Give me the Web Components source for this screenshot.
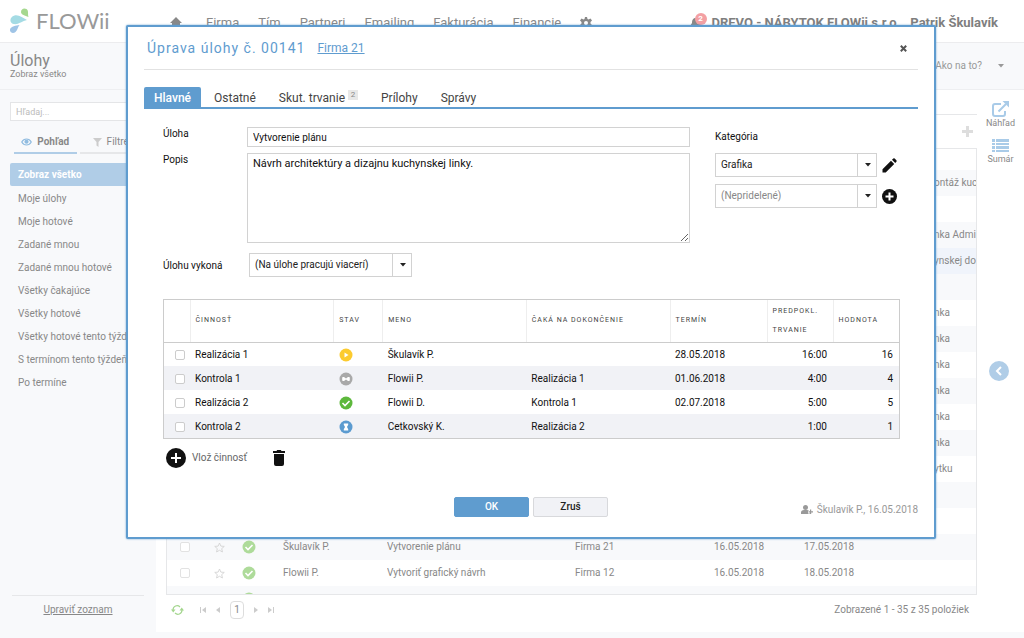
<!DOCTYPE html>
<html lang="sk">
<head>
<meta charset="utf-8">
<meta name="viewport" content="width=device-width, initial-scale=1">
<title>FLOWii - Úlohy</title>
<style>
    body {
        margin: 0;
        font-family: Roboto, "Liberation Sans", sans-serif;
        font-size: 10px;
        line-height: 12px;
        color: #888;
        background: #f8f9fb;
    }
</style>
</head>
<body>
<flowii-app></flowii-app>

<script>
const icons = {
    home: '<svg width="12" height="12" viewBox="0 0 12 12"><path fill="#888" d="M6 0 12 6H10V11H7V8H5V11H2V6H0Z"/></svg>',
    gear: '<svg width="12" height="12" viewBox="0 0 24 24"><path fill="#888" d="M10 0h4l1 4 2 1 4-2 3 4-3 3v3l3 3-2 4-4-1-3 2-1 3h-4l-1-3-3-2-4 1-2-4 3-3v-3L0 7l3-4 4 2 2-1Zm2 8a4 4 0 1 0 0 8 4 4 0 0 0 0-8Z"/></svg>',
    bell: '<svg width="12" height="12" viewBox="0 0 12 12"><path fill="#888" d="M6 1c3 0 4 2 4 5l2 3H0l2-3c0-3 1-5 4-5ZM4 10h4l-2 2Z"/></svg>',
    caret: '<svg width="6" height="4" viewBox="0 0 6 4"><path fill="currentColor" d="M0 0h6L3 3.5Z"/></svg>',
    eye: '<svg width="11" height="8" viewBox="0 0 22 16"><path fill="none" stroke="#90bce0" stroke-width="2.4" d="M1.500 8C6 0 16 0 20.500 8 16 16 6 16 1.500 8Z"/><circle cx="11" cy="7.500" r="4.200" fill="#90bce0"/></svg>',
    filter: '<svg width="9" height="9" viewBox="0 0 9 9"><path fill="#ccc" d="M0 0h9L5.500 4v5L3.500 7.500V4Z"/></svg>',
    open: '<svg width="18" height="16" viewBox="0 0 18 16"><path fill="none" stroke="#a9cbe8" stroke-width="2" d="M9 3H3Q1 3 1 5v8q0 2 2 2h8q2 0 2-2v-3M6.500 10.500 14 3"/><path fill="#a9cbe8" d="M10.500 0H17v6.500Z"/></svg>',
    list: '<svg width="17" height="14" viewBox="0 0 17 14"><path fill="#a9cbe8" d="M0 0h3v3H0zM4 0h13v3H4zM0 4h3v2H0zM4 4h13v2H4zM0 7h3v3H0zM4 7h13v3H4zM0 11h3v2H0zM4 11h13v2H4z"/></svg>',
    left: '<svg width="20" height="20" viewBox="0 0 20 20"><circle cx="10" cy="10" r="10" fill="#b0cde7"/><path fill="none" stroke="#fff" stroke-width="2" d="m12 6-4 4 4 4"/></svg>',
    plus: '<svg width="11" height="11" viewBox="0 0 11 11"><path fill="#ddd" d="M4 0h3v4h4v3H7v4H4V7H0V4h4Z"/></svg>',
    star: '<svg width="11" height="11" viewBox="0 0 22 22"><path fill="none" stroke="#d4d4d4" stroke-width="1.800" d="m11 2 2.700 6.200 6.800.6-5.100 4.500 1.500 6.700-5.900-3.500L5.100 20l1.500-6.700L1.500 8.800l6.800-.6Z"/></svg>',
    donePale: '<svg width="14" height="14" viewBox="0 0 14 14"><circle cx="7" cy="7" r="6.500" fill="#aedb9a"/><path fill="none" stroke="#fff" stroke-width="1.600" d="m3.500 7 2.500 2.500L10.500 5"/></svg>',
    done: '<svg width="14" height="14" viewBox="0 0 14 14"><circle cx="7" cy="7" r="6.500" fill="#5db83c"/><path fill="none" stroke="#fff" stroke-width="1.600" d="m3.500 7 2.500 2.500L10.500 5"/></svg>',
    play: '<svg width="14" height="14" viewBox="0 0 14 14"><circle cx="7" cy="7" r="6.500" fill="#fccb2f"/><path fill="#fff" d="m5.500 4.500 4 2.500-4 2.500Z"/></svg>',
    pause: '<svg width="14" height="14" viewBox="0 0 14 14"><circle cx="7" cy="7" r="6.500" fill="#a9a9a9"/><path fill="#fff" d="M4 5h1l2 1.500L9 5h1q.8 0 .8.800v2.400q0 .8-.8.800H9L7 7.500 5 9H4q-.8 0-.8-.8V5.800Q3.200 5 4 5Z"/></svg>',
    wait: '<svg width="14" height="14" viewBox="0 0 14 14"><circle cx="7" cy="7" r="6.500" fill="#5b9bd0"/><path fill="#fff" d="M4.800 3.500h4.400v1.300L8 7l1.200 2.200v1.300H4.800V9.200L6 7 4.800 4.800Z"/></svg>',
    refresh: '<svg width="13" height="12" viewBox="0 0 26 24"><path fill="none" stroke="#a4d68e" stroke-width="2.400" d="M4 12C4 4 13 1 18 6M22 12c0 8-9 11-14 6"/><path fill="#a4d68e" d="M0 11h9l-4.500 6ZM17 13h9l-4.500-6Z"/></svg>',
    first: '<svg width="6" height="6" viewBox="0 0 6 6"><path fill="#ccc" d="M0 0h1v6H0zM6 0v6L2 3Z"/></svg>',
    prev: '<svg width="6" height="6" viewBox="0 0 6 6"><path fill="#ccc" d="M5 0v6L1 3Z"/></svg>',
    next: '<svg width="6" height="6" viewBox="0 0 6 6"><path fill="#ccc" d="M1 0v6l4-3Z"/></svg>',
    last: '<svg width="6" height="6" viewBox="0 0 6 6"><path fill="#ccc" d="M5 0h1v6H5zM0 0v6l4-3Z"/></svg>',
    close: '<svg width="7" height="7" viewBox="0 0 7 7"><path stroke="#555" stroke-width="2" d="m.8.8 5.400 5.400M6.200.8.8 6.200"/></svg>',
    pencil: '<svg width="15" height="15" viewBox="0 0 15 15"><path fill="#111" d="M.5 14.500V11.300L9 2.800 12.200 6l-8.500 8.500ZM10 1.800 11.300.6q.7-.6 1.400 0l1.700 1.700q.6.700 0 1.400L13.200 5Z"/></svg>',
    add: '<svg width="20" height="20" viewBox="0 0 20 20"><circle cx="10" cy="10" r="10" fill="#111"/><path fill="#fff" d="M9 5h2v4h4v2h-4v4H9v-4H5V9h4Z"/></svg>',
    addSmall: '<svg width="15" height="15" viewBox="0 0 15 15"><circle cx="7.500" cy="7.500" r="7.500" fill="#111"/><path fill="#fff" d="M6.500 3.500h2v3h3v2h-3v3h-2v-3h-3v-2h3Z"/></svg>',
    trash: '<svg width="12" height="16" viewBox="0 0 12 16"><path fill="#111" d="M0 1h3.500l.7-1h3.600l.7 1H12v2H0ZM1 4h10v10q0 2-2 2H3q-2 0-2-2Z"/></svg>',
    userAdd: '<svg width="12" height="10" viewBox="0 0 12 10"><circle cx="4.500" cy="2.600" r="2.500" fill="#999"/><path fill="#999" d="M0 9V7.500Q0 5 3 5h3q1.500 0 2 1H7v2.500h2V9ZM9 4.500h1.200v1.700H12v1.200h-1.800V9H9V7.400H7.500V6.200H9Z"/></svg>',
    drops: '<svg width="20" height="26" viewBox="0 0 20 26"><path fill="#a5d88f" d="M18.500 9C15 7.500 11 7 11 4c0-3 3-4.500 5.500-3C19 2.500 17.500 6 18.500 9Z"/><path fill="#a4dbe4" d="M17 12C13 10 9 6.500 4.500 7.500c-5 1.500-5.500 7-1 8.500 4.500 1 8.500-3 13.500-4Z"/><path fill="#9fc4e6" d="M9.500 17C6 17.500 1 18 0 21.500c-.5 3 3 4.500 5.500 2.500 2.500-2 2-5 4-7Z"/></svg>'
};

// rules every shadow root needs
const base = `
    * { box-sizing: border-box; }
    svg { display: block; flex: none; }
    a { color: inherit; }
    button, input, select, textarea { font: inherit; color: inherit; margin: 0; }
    button { display: flex; align-items: center; justify-content: center; padding: 0; border: 0; background: none; }
    input[type=checkbox] { appearance: none; display: block; width: 10px; height: 10px; border: 1px solid #ccc; border-radius: 2px; background: #fff; }
`;

class FlowiiElement extends HTMLElement {
    constructor() {
        super();
        this.attachShadow({ mode: 'open' });
    }

    connectedCallback() {
        this.shadowRoot.innerHTML = `<style>${base}${this.styles()}</style>${this.render()}`;
    }
}

class FlowiiHeader extends FlowiiElement {
    styles() {
        return `
            :host { display: flex; align-items: center; height: 43px; padding: 0 26px 0 10px; background: #fff; border-bottom: 1px solid #ececee; font-size: 13px; line-height: 16px; white-space: nowrap; }
            .logo { display: flex; align-items: center; gap: 6px; width: 160px; font-family: Lato, sans-serif; font-size: 22px; line-height: 26px; color: #999; }
            nav { display: flex; align-items: center; gap: 19px; flex: 1; padding-top: 4px; }
            nav a { text-decoration: none; }
            nav a:first-child { margin-right: 5px; }
            .user { display: flex; align-items: center; gap: 10px; padding-top: 4px; font-weight: 700; color: #7f7f7f; }
            .bell { position: relative; }
            .badge { position: absolute; left: 5px; top: -4px; width: 12px; height: 12px; border-radius: 6px; background: #f3a0a3; color: #fff; font-size: 8px; line-height: 12px; text-align: center; }
        `;
    }

    render() {
        const links = ['Firma', 'Tím', 'Partneri', 'Emailing', 'Fakturácia', 'Financie'];
        return `
            <div class="logo">${icons.drops}<span>FLOWii</span></div>
            <nav>
                <a href="#" aria-label="Domov">${icons.home}</a>
                ${links.map(l => `<a href="#">${l}</a>`).join('')}
                <a href="#" aria-label="Nastavenia">${icons.gear}</a>
            </nav>
            <div class="user">
                <span class="bell">${icons.bell}<span class="badge">2</span></span>
                <span>DREVO - NÁBYTOK FLOWii s.r.o.</span>
                <span>Patrik Škulavík</span>
            </div>
        `;
    }
}

class PageTitle extends FlowiiElement {
    styles() {
        return `
            :host { display: flex; align-items: center; justify-content: space-between; height: 47px; padding: 0 20px 0 10px; border-bottom: 1px solid #eeeff1; }
            h1 { margin: 0; font-size: 16px; line-height: 16px; font-weight: 400; }
            p { margin: 0; font-size: 9px; line-height: 11px; }
            button { gap: 16px; color: #999; }
        `;
    }

    render() {
        return `
            <div><h1>Úlohy</h1><p>Zobraz všetko</p></div>
            <button>Ako na to? ${icons.caret}</button>
        `;
    }
}

class TaskSidebar extends FlowiiElement {
    styles() {
        return `
            :host { display: flex; flex-direction: column; padding: 12px 10px 22px; white-space: nowrap; }
            input { width: 100%; height: 19px; padding: 0 5px; border: 1px solid #e4e5e7; background: #fff; font-size: 9px; }
            input::placeholder { color: #bbb; }
            .tabs { display: flex; gap: 3px; margin: 11px 4px 9px; }
            .tabs button { flex: 1; height: 22px; gap: 5px; border-bottom: 2px solid #e6e7e9; }
            .tabs button.active { border-color: #b0cde7; font-weight: 700; }
            ul { flex: 1; margin: 0; padding: 0; list-style: none; }
            li a { display: block; padding: 0 8px; line-height: 23px; text-decoration: none; }
            li.active { margin-bottom: 1px; background: #b0cde7; border-radius: 2px; font-weight: 700; color: #fff; }
            .edit { margin: 0 2px; padding-top: 8px; border-top: 1px solid #e6e7e9; text-align: center; }
        `;
    }

    render() {
        const views = ['Zobraz všetko', 'Moje úlohy', 'Moje hotové', 'Zadané mnou', 'Zadané mnou hotové', 'Všetky čakajúce',
            'Všetky hotové', 'Všetky hotové tento týždeň', 'S termínom tento týždeň', 'Po termíne'];
        return `
            <input type="text" placeholder="Hľadaj..." aria-label="Hľadaj">
            <div class="tabs">
                <button class="active">${icons.eye}Pohľad</button>
                <button>${icons.filter}Filtre</button>
            </div>
            <ul>${views.map((v, i) => `<li class="${i ? '' : 'active'}"><a href="#">${v}</a></li>`).join('')}</ul>
            <div class="edit"><a href="#">Upraviť zoznam</a></div>
        `;
    }
}

class TaskList extends FlowiiElement {
    styles() {
        return `
            :host { display: flex; flex-direction: column; min-width: 0; min-height: 0; padding: 24px 0 0 10px; }
            .bar { display: flex; align-items: center; justify-content: flex-end; height: 34px; padding-right: 4px; border-top: 1px solid #e6e7e9; }
            .rows { flex: 1; min-height: 0; overflow: hidden; border: 1px solid #e6e7e9; }
            table { width: 100%; table-layout: fixed; border-collapse: collapse; }
            thead th { height: 21px; padding: 0; }
            td { height: 26px; padding: 0; white-space: nowrap; overflow: hidden; }
            tbody tr:nth-child(odd) { background: #f8f9fb; }
            tbody tr.current { background: #f0f4fb; }
            td:first-child { padding-left: 13px; }
            td input[type=checkbox] { border-color: #e2e2e2; }
            footer { display: flex; align-items: center; gap: 9px; height: 37px; padding: 0 8px 8px 5px; }
            footer span { flex: 1; text-align: right; }
            .page { width: 14px; height: 18px; border: 1px solid #ddd; border-radius: 4px; }
            .refresh { margin-right: 7px; }
        `;
    }

    render() {
        const ends = ['ontáž kuc', '', 'nka Admin', 'ynskej do', '', 'nka', 'nka', 'nka', 'nka', 'nka', 'nka', 'ytku', '', ''];
        const rows = ends.map(e => ['', '', '', '', '', e]).concat([
            ['Škulavík P.', 'Vytvorenie plánu', 'Firma 21', '16.05.2018', '17.05.2018', ''],
            ['Flowii P.', 'Vytvoriť grafický návrh', 'Firma 12', '16.05.2018', '18.05.2018', ''],
            ['', '', '', '', '', '']
        ]);
        const cols = [47, 28, 41, 104, 188, 139, 90, 130];
        return `
            <div class="bar"><button aria-label="Pridať">${icons.plus}</button></div>
            <div class="rows">
                <table>
                    <colgroup>${cols.map(c => `<col style="width: ${c}px">`).join('')}<col></colgroup>
                    <thead><tr><th colspan="9"></th></tr></thead>
                    <tbody>${rows.map((r, i) => `
                        <tr class="${i === 3 ? 'current' : ''}">
                            <td><input type="checkbox" aria-label="Vybrať úlohu"></td>
                            <td>${icons.star}</td>
                            <td>${icons.donePale}</td>
                            ${r.map(c => `<td>${c}</td>`).join('')}
                        </tr>`).join('')}
                    </tbody>
                </table>
            </div>
            <footer>
                <button class="refresh" aria-label="Obnoviť">${icons.refresh}</button>
                <button aria-label="Prvá">${icons.first}</button>
                <button aria-label="Predošlá">${icons.prev}</button>
                <button class="page">1</button>
                <button aria-label="Ďalšia">${icons.next}</button>
                <button aria-label="Posledná">${icons.last}</button>
                <span>Zobrazené 1 - 35 z 35 položiek</span>
            </footer>
        `;
    }
}

class SideTools extends FlowiiElement {
    styles() {
        return `
            :host { display: flex; flex-direction: column; align-items: center; padding: 11px 0; font-size: 9px; }
            button { flex-direction: column; margin-bottom: 10px; }
            .toggle { margin: 186px 4px 0 0; }
        `;
    }

    render() {
        return `
            <button>${icons.open}Náhľad</button>
            <button>${icons.list}Sumár</button>
            <button class="toggle" aria-label="Zobraziť panel">${icons.left}</button>
        `;
    }
}

class SelectBox extends FlowiiElement {
    styles() {
        return `
            :host { display: grid; height: 24px; color: #222; }
            :host([muted]) { color: #888; }
            select, span { grid-area: 1 / 1; }
            select { appearance: none; width: 100%; height: 24px; padding: 0 24px 0 5px; border: 1px solid #d2d2d2; border-radius: 0; background: #fff; }
            span { justify-self: end; display: flex; align-items: center; justify-content: center; width: 20px; border-left: 1px solid #d2d2d2; pointer-events: none; color: #222; }
        `;
    }

    render() {
        return `
            <select aria-label="${this.getAttribute('label')}"><option>${this.getAttribute('value')}</option></select>
            <span>${icons.caret}</span>
        `;
    }
}

class ActivityTable extends FlowiiElement {
    styles() {
        return `
            :host { display: block; border: 1px solid #ccc; color: #111; }
            table { width: 100%; table-layout: fixed; border-collapse: collapse; }
            th { height: 42px; padding: 0 5px; border-left: 1px solid #eee; border-bottom: 1px solid #ccc; font-size: 7px; line-height: 19px; font-weight: 400; letter-spacing: 1px; text-align: left; text-transform: uppercase; color: #444; }
            th:first-child { border-left: 0; }
            td { height: 24px; padding: 1px 6px 0 5px; }
            td:nth-child(n+7) { text-align: right; }
            tbody tr:nth-child(even) { background: #f1f2f6; }
            td input { margin-left: 6px; }
        `;
    }

    render() {
        const head = ['', 'Činnosť', 'Stav', 'Meno', 'Čaká na dokončenie', 'Termín', 'Predpokl. trvanie', 'Hodnota'];
        const widths = ['26px', '', '49px', '', '', '97px', '66px', '66px'];
        const rows = [
            ['Realizácia 1', icons.play, 'Škulavík P.', '', '28.05.2018', '16:00', '16'],
            ['Kontrola 1', icons.pause, 'Flowii P.', 'Realizácia 1', '01.06.2018', '4:00', '4'],
            ['Realizácia 2', icons.done, 'Flowii D.', 'Kontrola 1', '02.07.2018', '5:00', '5'],
            ['Kontrola 2', icons.wait, 'Cetkovský K.', 'Realizácia 2', '', '1:00', '1']
        ];
        return `
            <table>
                <colgroup>${widths.map(w => `<col style="width: ${w || 'auto'}">`).join('')}</colgroup>
                <thead><tr>${head.map(h => `<th>${h}</th>`).join('')}</tr></thead>
                <tbody>${rows.map(r => `
                    <tr><td><input type="checkbox" aria-label="${r[0]}"></td>${r.map(c => `<td>${c}</td>`).join('')}</tr>`).join('')}
                </tbody>
            </table>
        `;
    }
}

class TaskForm extends FlowiiElement {
    styles() {
        return `
            :host { display: block; padding: 18px 18px 0 19px; color: #111; }
            .top { display: grid; grid-template-columns: minmax(0, 1fr) 185px; gap: 25px; }
            .fields { display: grid; grid-template-columns: 84px minmax(0, 1fr); row-gap: 6px; }
            label { padding-top: 1px; }
            .fields input, textarea { width: 100%; border: 1px solid #d2d2d2; background: #fff; padding: 0 5px; }
            .fields input { height: 20px; }
            textarea { display: block; height: 90px; padding: 4px 5px; font-size: 11px; }
            .who { display: contents; }
            .who label { padding-top: 11px; }
            .who select-box { width: 163px; margin: 4px 2px 0; }
            .category h2 { margin: 4px 0 10px; font-size: 10px; line-height: 12px; font-weight: 400; }
            .pick { display: grid; grid-template-columns: 162px 15px; align-items: center; gap: 5px; margin-bottom: 7px; }
            activity-table { margin-top: 22px; }
            .actions { display: flex; align-items: center; gap: 26px; padding: 9px 3px 0; color: #666; }
            .actions button { gap: 6px; }
        `;
    }

    render() {
        return `
            <div class="top">
                <div class="fields">
                    <label for="task">Úloha</label>
                    <input type="text" id="task" value="Vytvorenie plánu">
                    <label for="note">Popis</label>
                    <textarea id="note">Návrh architektúry a dizajnu kuchynskej linky.</textarea>
                    <div class="who">
                        <label>Úlohu vykoná</label>
                        <select-box label="Úlohu vykoná" value="(Na úlohe pracujú viacerí)"></select-box>
                    </div>
                </div>
                <div class="category">
                    <h2>Kategória</h2>
                    <div class="pick">
                        <select-box label="Kategória" value="Grafika"></select-box>
                        <button aria-label="Upraviť kategóriu">${icons.pencil}</button>
                    </div>
                    <div class="pick">
                        <select-box muted label="Ďalšia kategória" value="(Nepridelené)"></select-box>
                        <button aria-label="Pridať kategóriu">${icons.addSmall}</button>
                    </div>
                </div>
            </div>
            <activity-table></activity-table>
            <div class="actions">
                <button>${icons.add}Vlož činnosť</button>
                <button aria-label="Odstrániť">${icons.trash}</button>
            </div>
        `;
    }
}

class TaskDialog extends FlowiiElement {
    styles() {
        return `
            :host { display: block; padding: 0 16px 20px; background: #fff; border: 2px solid #5f9ccf; border-radius: 2px; box-shadow: 0 0 2px #5f9ccf; }
            header { display: flex; align-items: center; height: 43px; padding: 0 11px 0 3px; border-bottom: 1px solid #e2e2e2; }
            h2 { margin: 0 12px 0 0; font-size: 14px; line-height: 18px; font-weight: 400; letter-spacing: 1px; color: #5f9ccf; }
            ::slotted(a) { flex: 1; font-size: 12px; color: #5f9ccf; }
            .tabs { display: flex; gap: 3px; margin-top: 17px; border-bottom: 2px solid #5f9ccf; font-size: 12px; color: #444; }
            .tabs button { height: 20px; padding: 1px 10px 0; gap: 3px; border-radius: 2px 2px 0 0; }
            .tabs button.active { background: #5f9ccf; color: #fff; font-weight: 500; }
            sup { align-self: flex-start; width: 10px; margin-top: 2px; font-size: 8px; line-height: 10px; background: #e8e8e8; color: #888; }
            footer { display: grid; grid-template-columns: 1fr auto 1fr; align-items: center; margin-top: 29px; }
            .buttons { grid-column: 2; display: flex; gap: 4px; }
            .buttons button { width: 75px; height: 20px; border: 1px solid #d8d9dc; border-radius: 2px; background: #f1f2f6; color: #222; font-weight: 500; }
            .buttons .ok { background: #5f9ccf; border-color: #5f9ccf; color: #fff; }
            .author { justify-self: end; display: flex; align-items: center; gap: 4px; padding-top: 6px; color: #999; }
        `;
    }

    render() {
        return `
            <header>
                <h2><slot name="title"></slot></h2>
                <slot name="link"></slot>
                <button aria-label="Zavrieť">${icons.close}</button>
            </header>
            <div class="tabs">
                <button class="active">Hlavné</button>
                <button>Ostatné</button>
                <button>Skut. trvanie <sup>2</sup></button>
                <button>Prílohy</button>
                <button>Správy</button>
            </div>
            <slot></slot>
            <footer>
                <div class="buttons"><button class="ok">OK</button><button>Zruš</button></div>
                <div class="author">${icons.userAdd}<slot name="author"></slot></div>
            </footer>
        `;
    }
}

class FlowiiApp extends FlowiiElement {
    styles() {
        return `
            :host { display: flex; flex-direction: column; height: 100vh; }
            .body { flex: 1; min-height: 0; display: grid; grid-template-columns: 156px minmax(0, 1fr); }
            main { display: grid; grid-template-columns: minmax(0, 1fr) 47px; min-height: 0; margin-bottom: 6px; background: #fff; }
            task-dialog { position: absolute; top: 25px; left: 126px; right: 88px; }
            task-dialog a { color: #5f9ccf; }
        `;
    }

    render() {
        return `
            <flowii-header></flowii-header>
            <page-title></page-title>
            <div class="body">
                <task-sidebar></task-sidebar>
                <main>
                    <task-list></task-list>
                    <side-tools></side-tools>
                </main>
            </div>
            <task-dialog role="dialog">
                <span slot="title">Úprava úlohy č. 00141</span>
                <a slot="link" href="#">Firma 21</a>
                <task-form></task-form>
                <span slot="author">Škulavík P., 16.05.2018</span>
            </task-dialog>
        `;
    }
}

customElements.define('flowii-header', FlowiiHeader);
customElements.define('page-title', PageTitle);
customElements.define('task-sidebar', TaskSidebar);
customElements.define('task-list', TaskList);
customElements.define('side-tools', SideTools);
customElements.define('select-box', SelectBox);
customElements.define('activity-table', ActivityTable);
customElements.define('task-form', TaskForm);
customElements.define('task-dialog', TaskDialog);
customElements.define('flowii-app', FlowiiApp);
</script>
</body>
</html>
